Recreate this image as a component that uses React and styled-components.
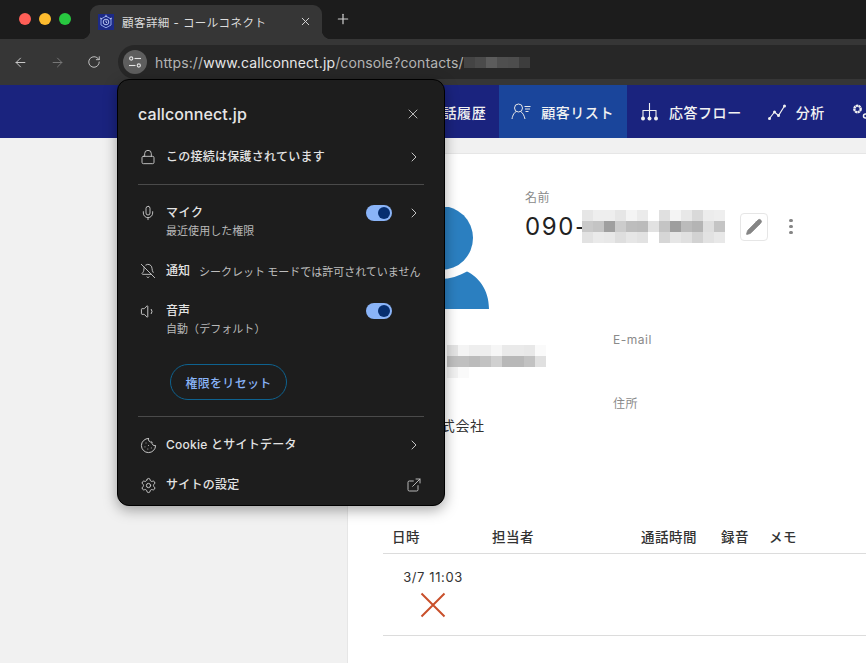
import React from 'react';
import styled, { createGlobalStyle } from 'styled-components';
import { X, Plus, ArrowLeft, ArrowRight, RotateCw, ChevronRight, Lock, Mic, BellOff, Volume1, Cookie, Settings, ExternalLink, Pencil } from 'lucide-react';

const Global = createGlobalStyle`
  html, body { margin: 0; padding: 0; background: #fff; }
  * { box-sizing: border-box; }
  body { font-family: Inter, "Noto Sans CJK JP", sans-serif; }
`;
const Page = styled.div`
  position: relative; width: 866px; height: 663px; overflow: hidden;
  display: flex; flex-direction: column; background: #f1f1f1;
`;
const TabStrip = styled.div`
  height: 39px; flex: none; background: #1c1c1c; display: flex; align-items: flex-end; padding-left: 19px;
`;
const Lights = styled.div`
  display: flex; gap: 8px; align-self: flex-start; margin-top: 13px; width: 71px;
`;
const Light = styled.span`
  width: 12px; height: 12px; border-radius: 50%; background: ${p => p.$c};
`;
const Tab = styled.div`
  position: relative; width: 232px; height: 34px; background: #363636; border-radius: 9px 9px 0 0;
  display: flex; align-items: center; padding: 0 10px 1px 8px; gap: 8px; color: #d6d6d6;
  &::before, &::after { content: ""; position: absolute; bottom: 0; width: 9px; height: 9px; }
  &::before { left: -9px; background: radial-gradient(circle at 0 0, #1c1c1c 9px, #363636 9.5px); }
  &::after { right: -9px; background: radial-gradient(circle at 100% 0, #1c1c1c 9px, #363636 9.5px); }
`;
const TabTitle = styled.span`
  flex: 1; font: 400 11.5px Inter, "Noto Sans CJK JP", sans-serif; letter-spacing: .45px; color: #dcdcdc; white-space: nowrap;
`;
const NewTab = styled.div`
  align-self: flex-start; margin: 11px 0 0 13px; color: #d0d0d0; display: flex;
`;
const Toolbar = styled.div`
  height: 46px; flex: none; background: #363636; padding: 6px 0 6px 13px; display: flex; align-items: center;
`;
const NavButtons = styled.div`
  display: flex; gap: 22px; width: 105px; align-items: center;
`;
const NavBtn = styled.span`
  display: flex; color: ${p => (p.$dim ? '#777' : '#c8c8c8')};
`;
const Omnibox = styled.div`
  flex: 1; height: 34px; background: #272727; border-radius: 17px 0 0 17px; display: flex; align-items: center; padding-left: 5px; gap: 8px;
`;
const SiteChip = styled.span`
  width: 24px; height: 24px; border-radius: 50%; background: #5e5e5e; display: flex; align-items: center; justify-content: center;
`;
const Url = styled.div`
  display: flex; align-items: center; font: 400 14px Inter, sans-serif; color: #b4b4b4; letter-spacing: .12px;
  b { font-weight: 400; color: #e6e6e6; }
`;
const Mosaic = styled.div`
  display: grid; grid-template-columns: repeat(${p => p.$cols}, ${p => p.$cell || 11}px); grid-auto-rows: 11px; flex: none;
`;
const Cell = styled.i`
  background: ${p => p.$c};
`;
const NavBar = styled.nav`
  height: 53px; flex: none; display: flex; align-items: stretch; padding-left: 416px; overflow: hidden;
  background: #1a237e;
`;
const NavItem = styled.div`
  display: flex; align-items: center; gap: ${p => p.$gap || 9}px; padding: 0 ${p => p.$r ?? 13}px 0 ${p => p.$l ?? 12}px;
  background: ${p => (p.$active ? '#1a459b' : 'transparent')};
  color: #f2f2f2; font: 500 14px "Noto Sans CJK JP", sans-serif; letter-spacing: .55px; white-space: nowrap; flex: none;
`;
const Body = styled.div`
  flex: 1; padding: 15px 0 0 347px; min-height: 0;
`;
const Main = styled.main`
  height: 100%; background: #fff; border-top: 1px solid #e6e6e6; border-left: 1px solid #e6e6e6; padding-top: 37px;
`;
const Profile = styled.section`
  display: flex; align-items: flex-start; padding-left: 45px; gap: 36px;
`;
const AvatarArt = styled.svg`
  flex: none; width: 96px; height: 102px; margin-top: 16px;
`;
const Label = styled.div`
  font: 400 12px/14px Inter, "Noto Sans CJK JP", sans-serif; color: #8a8a8a; letter-spacing: .5px;
`;
const NameRow = styled.div`
  display: flex; align-items: center; margin-top: 5px;
`;
const NameText = styled.span`
  font: 400 24px/33px Inter, sans-serif; color: #222; letter-spacing: 1.6px; width: 57px; white-space: nowrap;
`;
const EditBtn = styled.button`
  width: 28px; height: 28px; margin-left: 15px; padding: 0; background: #fff; border: 1px solid #e6e6e6; border-radius: 4px;
  display: flex; align-items: center; justify-content: center; color: #858585;
`;
const Dots = styled.div`
  display: flex; flex-direction: column; gap: 2.5px; margin-left: 21px;
`;
const Dot = styled.span`
  width: 3.5px; height: 3.5px; border-radius: 50%; background: #858585;
`;
const Info = styled.section`
  display: grid; grid-template-columns: 220px 1fr; padding-left: 45px; margin-top: 24px; height: 186px; grid-template-rows: 64px auto;
`;
const InfoCell = styled.div`
  padding-top: ${p => p.$top || 0}px; padding-left: ${p => p.$left || 0}px;
`;
const Company = styled.div`
  font: 400 14px/20px "Noto Sans CJK JP", sans-serif; color: #333; letter-spacing: .7px; margin-top: 18px; padding-left: 33px;
`;
const TableWrap = styled.section`
  margin-left: 35px; color: #333;
`;
const THead = styled.div`
  display: grid; grid-template-columns: 100px 149px 80px 48px 1fr; height: 35px; padding-left: 9px; align-items: center;
  border-bottom: 1px solid #dcdcdc; font: 500 13.5px "Noto Sans CJK JP", sans-serif; letter-spacing: .5px; color: #333;
`;
const TRow = styled.div`
  height: 82px; border-bottom: 1px solid #dcdcdc; padding: 14px 0 0 18px;
`;
const DateCell = styled.div`
  width: 64px; display: flex; flex-direction: column; align-items: center; gap: 6px;
  font: 400 13px/18px Inter, sans-serif; color: #333; letter-spacing: .6px; white-space: nowrap;
`;
const Popup = styled.aside`
  position: absolute; left: 117px; top: 79px; width: 328px; height: 427px; background: #1d1d1d; color: #e3e3e3;
  border: 1px solid #000; border-radius: 12px; box-shadow: 0 4px 14px rgba(0,0,0,.35); padding: 0 20px;
`;
const PopHead = styled.div`
  height: 68px; display: flex; align-items: center; justify-content: space-between; padding-right: 0;
  font: 500 16px Inter, sans-serif; color: #e6e6e6; letter-spacing: .1px;
`;
const PopClose = styled.span`
  display: flex; color: #c4c4c4; margin-right: 3px;
`;
const Row = styled.div`
  display: flex; align-items: ${p => (p.$top ? 'flex-start' : 'center')}; height: ${p => p.$h}px; margin-top: ${p => p.$mt || 0}px;
`;
const IconSlot = styled.span`
  width: 28px; flex: none; display: flex; justify-content: center; color: #c7c7c7; padding-right: 8px; margin-left: 0;
`;
const RowBody = styled.div`
  flex: 1; min-width: 0;
`;
const RowTitle = styled.div`
  font: 500 12px/16px Inter, "Noto Sans CJK JP", sans-serif; color: #e3e3e3; letter-spacing: ${p => p.$ls ?? 0.25}px; white-space: nowrap;
`;
const RowSub = styled.div`
  font: 400 11px/14px Inter, "Noto Sans CJK JP", sans-serif; color: #b9b9b9; margin-top: 3px; letter-spacing: .05px; white-space: nowrap;
`;
const RowNote = styled.span`
  font: 400 11px/16px "Noto Sans CJK JP", sans-serif; color: #bdbdbd; margin-left: 9px; white-space: nowrap; letter-spacing: -.02px;
`;
const Chevron = styled.span`
  display: flex; width: 16px; justify-content: center; color: #c4c4c4; margin-left: 14px; margin-right: 2px; flex: none;
`;
const Switch = styled.span`
  position: relative; width: 26px; height: 16px; border-radius: 8px; background: #8ab4f8; flex: none; display: block;
  &::after { content: ""; position: absolute; right: 2px; top: 2px; width: 12px; height: 12px; border-radius: 50%; background: #062e6f; }
`;
const ResetWrap = styled.div`
  padding-left: 32px; margin-top: 19px;
`;
const ResetBtn = styled.button`
  width: 117px; height: 36px; border: 1px solid #0e628f; border-radius: 18px; background: transparent; color: #8ab4f8; padding: 0;
  font: 500 12px "Noto Sans CJK JP", sans-serif; letter-spacing: .3px;
`;
const Divider = styled.hr`
  border: 0; height: 1px; background: #4a4a4a; margin: ${p => p.$m}; width: 286px;
`;

const Favicon = () => (
  <svg width="16" height="16" viewBox="0 0 16 16" style={{ flex: 'none' }}>
    <rect width="16" height="16" fill="#1c2a86" />
    <path d="M8 2.2 13 5v6l-5 2.8L3 11V5z" fill="none" stroke="#8ea2e6" strokeWidth="1" />
    <circle cx="8" cy="8" r="2.8" fill="none" stroke="#b6c3f0" strokeWidth="1" />
    <path d="M8 0.8v2M2 4l2 1M14 4l-2 1M8 6.5V8l1 1" fill="none" stroke="#c9d3f5" strokeWidth=".9" />
  </svg>
);
const TuneIcon = () => (
  <svg width="14" height="14" viewBox="0 0 14 14" fill="none" stroke="#e4e4e4" strokeWidth="1.1">
    <circle cx="3.2" cy="3.5" r="1.6" /><path d="M6.5 3.5H13" />
    <circle cx="10.8" cy="10.5" r="1.6" /><path d="M1 10.5h6.5" />
  </svg>
);
const UserListIcon = () => (
  <svg width="21" height="17" viewBox="0 0 21 17" fill="none" stroke="#e8e8e8" strokeWidth="1">
    <circle cx="7.5" cy="5" r="4" /><path d="M1 16c.6-4 2.6-7 4.5-7.5M9.5 8.5c2 1 3.6 3.5 4.5 7.5" />
    <path d="M13.5 3.5h6M14 6h5M14.5 8.5h3" />
  </svg>
);
const FlowIcon = () => (
  <svg width="17" height="18" viewBox="0 0 17 18" fill="none" stroke="#f0f0f0" strokeWidth="1.1">
    <path d="M8.5 0v15M2 15V7.5h13V15" />
    <g fill="#f0f0f0" stroke="none"><circle cx="2" cy="15.5" r="2" /><circle cx="8.5" cy="15.5" r="2" /><circle cx="15" cy="15.5" r="2" /></g>
  </svg>
);
const ChartIcon = () => (
  <svg width="18" height="16" viewBox="0 0 18 16" fill="none" stroke="#f0f0f0" strokeWidth="1.2">
    <path d="M1.5 14.5 6.5 8l4 3.5L16.5 2" />
    <g fill="#f0f0f0" stroke="none"><circle cx="1.5" cy="14.5" r="1.5" /><circle cx="6.5" cy="8" r="1.5" /><circle cx="10.5" cy="11.5" r="1.5" /><circle cx="16.5" cy="2" r="1.5" /></g>
  </svg>
);
const GearsIcon = () => (
  <svg width="18" height="18" viewBox="0 0 18 18">
    <circle cx="5.5" cy="6" r="3.2" fill="none" stroke="#f2f2f2" strokeWidth="2.4" strokeDasharray="2.2 .4" />
    <circle cx="13.5" cy="13" r="2" fill="none" stroke="#f2f2f2" strokeWidth="1.5" />
  </svg>
);

const urlCells = ['#444', '#4b4b4b', '#5c5c5c', '#4f4f4f', '#4d4d4d', '#3d3d3d'];
const nameCells = [
  '#e6e6e6', '#eeeeee', '#eeeeee', '#e6e6e6', '#f4f4f4', '#ebebeb', '#fff', '#e0e0e0', '#f4f4f4', '#e8e8e8', '#d9d9d9', '#ececec', '#eeeeee',
  '#c9c9c9', '#c4c4c4', '#9f9f9f', '#cccccc', '#bdbdbd', '#bbbbbb', '#e2e2e2', '#c4c4c4', '#9e9e9e', '#bbbbbb', '#b4b4b4', '#dedede', '#c4c4c4',
  '#e2e2e2', '#eaeaea', '#e8e8e8', '#dedede', '#e6e6e6', '#e2e2e2', '#fff', '#d6d6d6', '#e6e6e6', '#e0e0e0', '#d2d2d2', '#e2e2e2', '#e8e8e8',
];
const mailCells = [
  '#e4e4e4', '#f4f4f4', '#eeeeee', '#eeeeee', '#f6f6f6', '#eaeaea', '#eaeaea', '#e8e8e8', '#fafafa',
  '#c0c0c0', '#c0c0c0', '#bbbbbb', '#c2c2c2', '#d0d0d0', '#b8b8b8', '#b8b8b8', '#c2c2c2', '#e0e0e0',
  '#f2f2f2', '#fafafa', '#fff', '#fff', '#fff', '#fff', '#fff', '#fff', '#fff',
];
const Blur = ({ cells, cols }) => (
  <Mosaic $cols={cols}>{cells.map((c, i) => <Cell key={i} $c={c} />)}</Mosaic>
);

export default function App() {
  return (
    <Page>
      <Global />
      <TabStrip>
        <Lights>
          <Light $c="#ff5f57" /><Light $c="#febc2e" /><Light $c="#28c840" />
        </Lights>
        <Tab>
          <Favicon />
          <TabTitle>顧客詳細 - コールコネクト</TabTitle>
          <X size={13} strokeWidth={1.8} />
        </Tab>
        <NewTab><Plus size={16} strokeWidth={1.8} /></NewTab>
      </TabStrip>
      <Toolbar>
        <NavButtons>
          <NavBtn><ArrowLeft size={15} strokeWidth={1.6} /></NavBtn>
          <NavBtn $dim><ArrowRight size={15} strokeWidth={1.6} /></NavBtn>
          <NavBtn><RotateCw size={14} strokeWidth={1.6} /></NavBtn>
        </NavButtons>
        <Omnibox>
          <SiteChip><TuneIcon /></SiteChip>
          <Url>https://<b>www.callconnect.jp</b>/console?contacts/<Blur cells={urlCells} cols={6} /></Url>
        </Omnibox>
      </Toolbar>
      <NavBar>
        <NavItem>通話履歴</NavItem>
        <NavItem $active><UserListIcon />顧客リスト</NavItem>
        <NavItem $l={14} $r={26} $gap={11}><FlowIcon />応答フロー</NavItem>
        <NavItem $l={0} $r={27} $gap={10}><ChartIcon />分析</NavItem>
        <NavItem $l={0} $r={0}><GearsIcon /></NavItem>
      </NavBar>
      <Body>
        <Main>
          <Profile>
            <AvatarArt viewBox="0 0 96 102">
              <circle cx="48" cy="31" r="32" fill="#2b7fc0" />
              <path d="M0 102C0 82 11 70 22 64.5 30 69 39 72 48 72s18-3 26-7.500C85 70 96 82 96 102z" fill="#2b7fc0" />
            </AvatarArt>
            <div>
              <Label>名前</Label>
              <NameRow>
                <NameText>090-</NameText>
                <Blur cells={nameCells} cols={13} />
                <EditBtn aria-label="編集"><Pencil size={18} fill="#858585" strokeWidth={1} /></EditBtn>
                <Dots><Dot /><Dot /><Dot /></Dots>
              </NameRow>
            </div>
          </Profile>
          <Info>
            <InfoCell $top={12} $left={54}><Blur cells={mailCells} cols={9} /></InfoCell>
            <InfoCell><Label>E-mail</Label></InfoCell>
            <InfoCell><Company>株式会社</Company></InfoCell>
            <InfoCell><Label>住所</Label></InfoCell>
          </Info>
          <TableWrap>
            <THead>
              <span>日時</span><span>担当者</span><span>通話時間</span><span>録音</span><span>メモ</span>
            </THead>
            <TRow>
              <DateCell>
                3/7 11:03
                <svg width="26" height="26" viewBox="0 0 26 26" stroke="#c9502b" strokeWidth="2" fill="none">
                  <path d="M1.500 1.500l23 23M24.500 1.500l-23 23" />
                </svg>
              </DateCell>
            </TRow>
          </TableWrap>
        </Main>
      </Body>
      <Popup>
        <PopHead>callconnect.jp<PopClose><X size={16} strokeWidth={1.4} /></PopClose></PopHead>
        <Row $h={38} $mt={-10}>
          <IconSlot><Lock size={16} strokeWidth={1.4} /></IconSlot>
          <RowBody><RowTitle>この接続は保護されています</RowTitle></RowBody>
          <Chevron><ChevronRight size={16} strokeWidth={1.5} /></Chevron>
        </Row>
        <Divider $m="8px 0 0" />
        <Row $h={42} $mt={20} $top>
          <IconSlot><Mic size={16} strokeWidth={1.4} /></IconSlot>
          <RowBody>
            <RowTitle $ls={0.6}>マイク</RowTitle>
            <RowSub>最近使用した権限</RowSub>
          </RowBody>
          <Switch />
          <Chevron><ChevronRight size={16} strokeWidth={1.5} /></Chevron>
        </Row>
        <Row $h={20} $mt={14}>
          <IconSlot><BellOff size={16} strokeWidth={1.4} /></IconSlot>
          <RowTitle $ls={0}>通知</RowTitle>
          <RowNote>シークレット モードでは許可されていません</RowNote>
        </Row>
        <Row $h={42} $mt={22} $top>
          <IconSlot><Volume1 size={17} strokeWidth={1.4} /></IconSlot>
          <RowBody>
            <RowTitle $ls={0}>音声</RowTitle>
            <RowSub>自動（デフォルト）</RowSub>
          </RowBody>
          <Switch />
          <Chevron />
        </Row>
        <ResetWrap><ResetBtn>権限をリセット</ResetBtn></ResetWrap>
        <Divider $m="16px 0 0" />
        <Row $h={20} $mt={18}>
          <IconSlot><Cookie size={17} strokeWidth={1.4} /></IconSlot>
          <RowBody><RowTitle>Cookie とサイトデータ</RowTitle></RowBody>
          <Chevron><ChevronRight size={16} strokeWidth={1.5} /></Chevron>
        </Row>
        <Row $h={20} $mt={20}>
          <IconSlot><Settings size={17} strokeWidth={1.4} /></IconSlot>
          <RowBody><RowTitle>サイトの設定</RowTitle></RowBody>
          <Chevron><ExternalLink size={16} strokeWidth={1.4} /></Chevron>
        </Row>
      </Popup>
    </Page>
  );
}
